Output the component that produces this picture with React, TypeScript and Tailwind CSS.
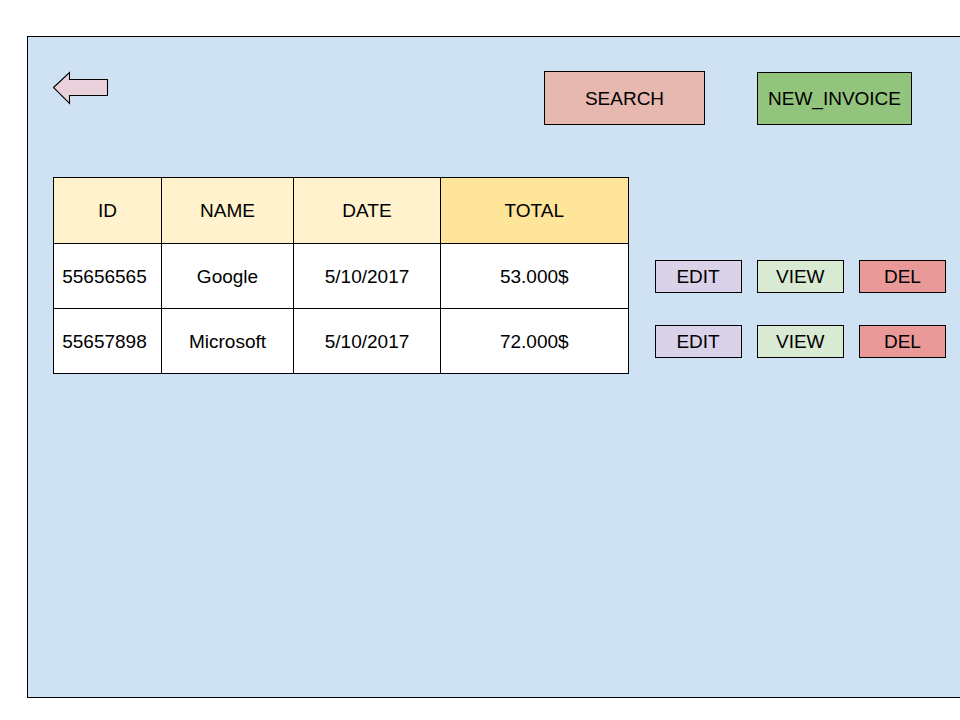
type Invoice = { id: string; name: string; date: string; total: string };

const invoices: Invoice[] = [
  { id: "55656565", name: "Google", date: "5/10/2017", total: "53.000$" },
  { id: "55657898", name: "Microsoft", date: "5/10/2017", total: "72.000$" },
];

const heading = "border border-black p-0 text-center font-normal";
const cell = "border border-black bg-white pt-0.5 pb-0 text-center";
const action = "h-[33px] flex-1 border border-black pt-0.5 text-center";

function BackArrow() {
  return (
    <svg width="56" height="34" viewBox="0 0 56 34" fill="#ead1dc" stroke="#000" strokeWidth="1.1" aria-hidden="true">
      <path d="M0.5 16.5 L16.5 1.5 V8.5 H54.5 V24.5 H16.5 V32.5 Z" />
    </svg>
  );
}

function InvoiceRow({ invoice }: { invoice: Invoice }) {
  return (
    <tr className="h-[65px]">
      <td className={`${cell} pr-1.5`}>{invoice.id}</td>
      <td className={cell}>{invoice.name}</td>
      <td className={cell}>{invoice.date}</td>
      <td className={cell}>{invoice.total}</td>
      <td className="p-0 pl-[26px]">
        <div className="flex gap-[15px]">
          <button type="button" className={`${action} bg-[#d9d2e9]`}>EDIT</button>
          <button type="button" className={`${action} bg-[#d9ead3]`}>VIEW</button>
          <button type="button" className={`${action} bg-[#ea9999]`}>DEL</button>
        </div>
      </td>
    </tr>
  );
}

export default function App() {
  return (
    <div className="flex min-h-screen flex-col bg-white pt-9 pb-[22px] pl-[27px] font-['Liberation_Sans',Arial,sans-serif] text-[19px] leading-6 text-black">
      <main className="flex-1 border-y border-l border-black bg-[#cfe2f3] pt-[34px] pr-3.5 pl-[25px]">
        <header className="flex items-start justify-between pr-[34px]">
          <button type="button" aria-label="Back">
            <BackArrow />
          </button>
          <div className="flex items-end gap-[52px]">
            <button type="button" className="h-[54px] w-[161px] border border-black bg-[#e6b8af] pt-px">
              SEARCH
            </button>
            <button type="button" className="h-[53px] w-[155px] border border-black bg-[#93c47d]">
              NEW_INVOICE
            </button>
          </div>
        </header>

        <table className="mt-[52px] w-full table-fixed border-collapse">
          <colgroup>
            <col className="w-[108px]" />
            <col className="w-[132px]" />
            <col className="w-[147px]" />
            <col />
            <col className="w-[318px]" />
          </colgroup>
          <thead>
            <tr className="h-[66px]">
              <th scope="col" className={`${heading} bg-[#fff2cc]`}>ID</th>
              <th scope="col" className={`${heading} bg-[#fff2cc]`}>NAME</th>
              <th scope="col" className={`${heading} bg-[#fff2cc]`}>DATE</th>
              <th scope="col" className={`${heading} bg-[#ffe599]`}>TOTAL</th>
              <td />
            </tr>
          </thead>
          <tbody>
            {invoices.map((invoice) => (
              <InvoiceRow key={invoice.id} invoice={invoice} />
            ))}
          </tbody>
        </table>
      </main>
    </div>
  );
}
